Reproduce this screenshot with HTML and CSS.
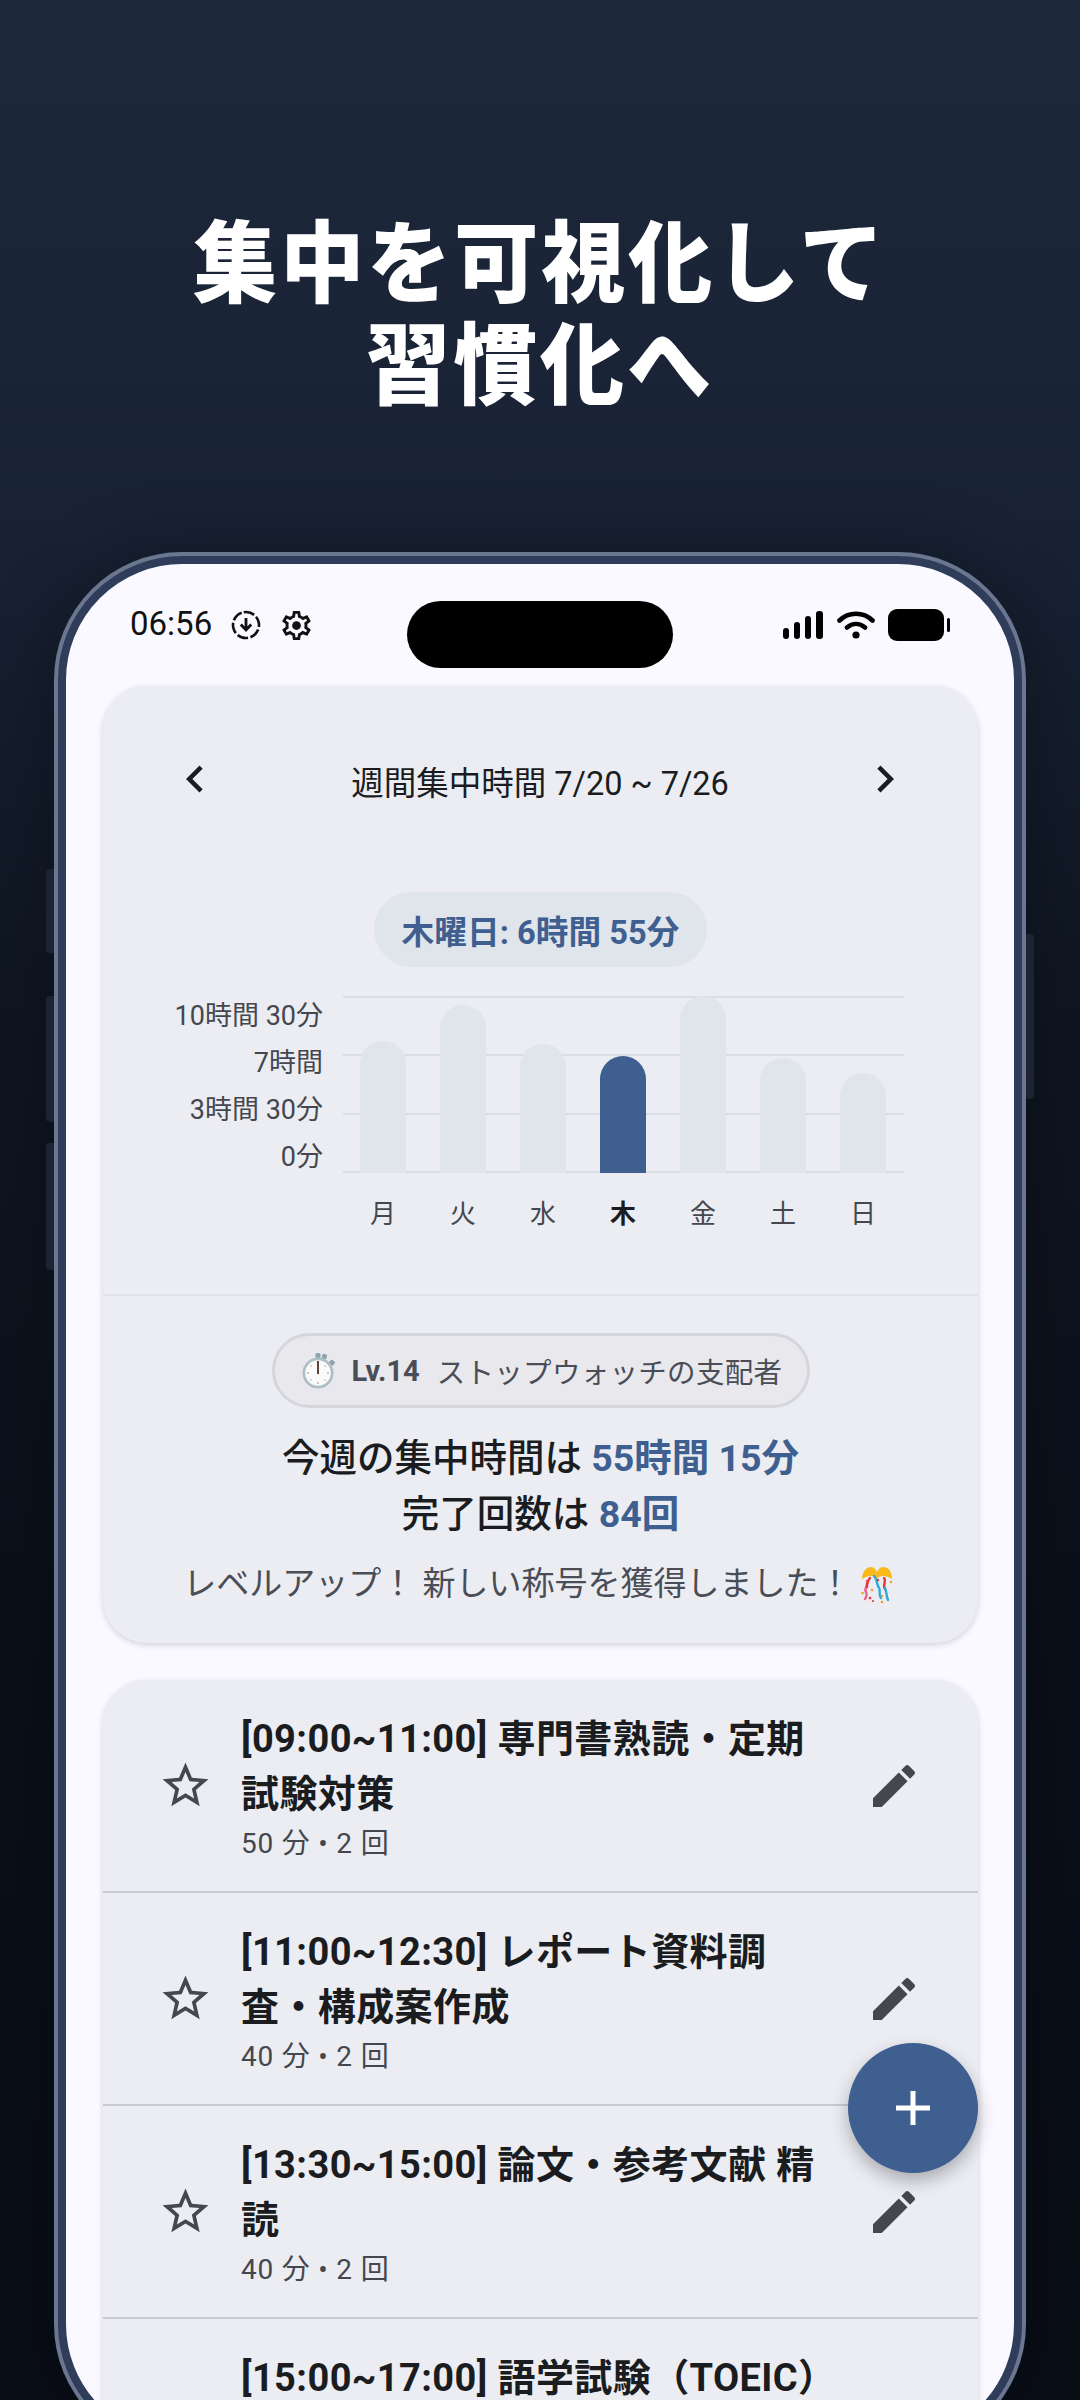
FILE: index.html
```html
<!DOCTYPE html>
<html lang="ja">
<head>
<meta charset="utf-8">
<title>集中を可視化して習慣化へ</title>
<link rel="stylesheet" href="styles.css">
</head>
<body>
<main class="stage">
  <h1 class="headline">集中を可視化して<br>習慣化へ</h1>
  <div class="phone">
    <span class="side side-a"></span>
    <span class="side side-b"></span>
    <span class="side side-c"></span>
    <span class="side side-r"></span>
    <div class="screen">
      <div class="island"></div>
      <header class="status">
        <div class="status-left">
          <span class="time">06:56</span>
          <svg class="ic-dl" viewBox="0 0 30 30"><circle cx="15" cy="15" r="13" fill="none" stroke="#111" stroke-width="2.6" stroke-dasharray="11 2.6" transform="rotate(-100 15 15)"/><path d="M15 8v11M9.8 14.5 15 20l5.2-5.5" fill="none" stroke="#111" stroke-width="2.8"/></svg>
          <svg class="ic-gear" viewBox="0 0 24 24"><path fill="#111" d="M19.43 12.98c.04-.32.07-.64.07-.98 0-.34-.03-.66-.07-.98l2.11-1.65c.19-.15.24-.42.12-.64l-2-3.46c-.09-.16-.26-.25-.44-.25-.06 0-.12.01-.17.03l-2.49 1c-.52-.4-1.08-.73-1.69-.98l-.38-2.65C14.46 2.18 14.25 2 14 2h-4c-.25 0-.46.18-.49.42l-.38 2.65c-.61.25-1.17.59-1.69.98l-2.49-1c-.06-.02-.12-.03-.18-.03-.17 0-.34.09-.43.25l-2 3.46c-.13.22-.07.49.12.64l2.11 1.65c-.04.32-.07.65-.07.98 0 .33.03.66.07.98l-2.11 1.65c-.19.15-.24.42-.12.64l2 3.46c.09.16.26.25.44.25.06 0 .12-.01.17-.03l2.49-1c.52.4 1.08.73 1.69.98l.38 2.65c.03.24.24.42.49.42h4c.25 0 .46-.18.49-.42l.38-2.65c.61-.25 1.17-.59 1.69-.98l2.49 1c.06.02.12.03.18.03.17 0 .34-.09.43-.25l2-3.46c.12-.22.07-.49-.12-.64l-2.11-1.65zm-1.98-1.71c.04.31.05.52.05.73 0 .21-.02.43-.05.73l-.14 1.13.89.7 1.08.84-.7 1.21-1.27-.51-1.04-.42-.9.68c-.43.32-.84.56-1.25.73l-1.06.43-.16 1.13-.2 1.35h-1.4l-.19-1.35-.16-1.13-1.06-.43c-.43-.18-.83-.41-1.23-.71l-.91-.7-1.06.43-1.27.51-.7-1.21 1.08-.84.89-.7-.14-1.13c-.03-.31-.05-.54-.05-.74s.02-.43.05-.73l.14-1.13-.89-.7-1.08-.84.7-1.21 1.27.51 1.04.42.9-.68c.43-.32.84-.56 1.25-.73l1.06-.43.16-1.13.2-1.35h1.39l.19 1.35.16 1.13 1.06.43c.43.18.83.41 1.23.71l.91.7 1.06-.43 1.27-.51.7 1.21-1.07.85-.89.7.14 1.13z"/><circle cx="12" cy="12" r="3" fill="#111"/></svg>
        </div>
        <div class="status-right">
          <svg class="ic-signal" viewBox="0 0 40 28"><g fill="#000"><rect x="0" y="17" width="6" height="11" rx="3"/><rect x="11" y="11" width="6" height="17" rx="3"/><rect x="22" y="5" width="6" height="23" rx="3"/><rect x="33" y="0" width="7" height="28" rx="3"/></g></svg>
          <svg class="ic-wifi" viewBox="0 0 38 28"><path d="M2.500 9.500C11.500 .5 26.500 .5 35.500 9.500M10 16.500C15.500 11.800 22.500 11.800 28 16.500" fill="none" stroke="#000" stroke-width="4.600" stroke-linecap="round"/><circle cx="19" cy="24" r="3.600" fill="#000"/></svg>
          <svg class="ic-batt" viewBox="0 0 62 32"><rect x="0" y="0" width="56" height="32" rx="9" fill="#000"/><rect x="59" y="9" width="3" height="14" rx="1.500" fill="#000"/></svg>
        </div>
      </header>

      <section class="card summary">
        <div class="nav">
          <svg class="ic-nav" viewBox="0 0 24 24"><path fill="#1a1c20" d="M15.41 7.41L14 6l-6 6 6 6 1.41-1.41L10.83 12z"/></svg>
          <span class="nav-title">週間集中時間 7/20 ~ 7/26</span>
          <svg class="ic-nav" viewBox="0 0 24 24"><path fill="#1a1c20" d="M10 6L8.59 7.41 13.17 12l-4.58 4.59L10 18l6-6z"/></svg>
        </div>
        <div class="pill-wrap"><span class="pill">木曜日: 6時間 55分</span></div>
        <div class="chart">
          <div class="y-axis">
            <span>10時間 30分</span>
            <span>7時間</span>
            <span>3時間 30分</span>
            <span>0分</span>
          </div>
          <div class="plot">
            <div class="grid-lines"><i></i><i></i><i></i><i></i></div>
            <div class="bars">
              <span class="bar" style="height:132px"></span>
              <span class="bar" style="height:168px"></span>
              <span class="bar" style="height:129px"></span>
              <span class="bar bar-on" style="height:117px"></span>
              <span class="bar" style="height:177px"></span>
              <span class="bar" style="height:115px"></span>
              <span class="bar" style="height:100px"></span>
            </div>
          </div>
          <div class="x-axis">
            <span>月</span><span>火</span><span>水</span><span class="x-on">木</span><span>金</span><span>土</span><span>日</span>
          </div>
        </div>
        <div class="stats">
          <div class="chip-wrap">
            <span class="chip">
              <svg class="ic-watch" viewBox="0 0 34 36">
                <rect x="21" y="1" width="5" height="5" rx="1.500" fill="#8fa3ad" transform="rotate(10 23 3)"/>
                <rect x="29" y="7" width="5" height="5" rx="1.500" fill="#8fa3ad" transform="rotate(40 31 9)"/>
                <rect x="14.500" y="0" width="5" height="5" rx="1.500" fill="#8fa3ad"/>
                <circle cx="17" cy="20" r="15.500" fill="#aebfc7"/>
                <circle cx="17" cy="20" r="12.800" fill="#fafafa"/>
                <g fill="#c9a58e"><circle cx="17" cy="10" r=".9"/><circle cx="27" cy="20" r=".9"/><circle cx="17" cy="30" r=".9"/><circle cx="7" cy="20" r=".9"/><circle cx="24" cy="13" r=".8"/><circle cx="10" cy="13" r=".8"/><circle cx="24" cy="27" r=".8"/><circle cx="10" cy="27" r=".8"/></g>
                <rect x="16" y="8" width="2" height="13" fill="#5d4037"/>
              </svg>
              <b class="chip-lv">Lv.14</b>
              <span class="chip-name">ストップウォッチの支配者</span>
            </span>
          </div>
          <p class="line">今週の集中時間は <b>55時間 15分</b></p>
          <p class="line">完了回数は <b>84回</b></p>
          <p class="levelup">レベルアップ！ 新しい称号を獲得しました！ <svg class="ic-party" viewBox="0 0 32 38">
            <path d="M1 13C1 5 6 1 10 1c3 0 5 3 6 5 1-2 3-5 6-5 5 0 9 4 9 12-3-2-6-3-9-3-3 0-5 1-6 3-1-2-3-3-6-3s-6 1-9 3z" fill="#f9b81c"/>
            <g fill="none" stroke-width="2.400" stroke-linecap="round">
              <path d="M6 15c3 4-4 7-1 11 1 2 1 4-1 7" stroke="#f06292"/>
              <path d="M9 12c-2 3-4 5-3 9" stroke="#e53935"/>
              <path d="M13 10c4 4 2 8 5 12 2 3-1 6 2 10" stroke="#29a9e0"/>
              <path d="M23 12c3 3-2 7 1 11" stroke="#e53935"/>
              <path d="M24 22c2 4 1 8 3 12" stroke="#29a9e0"/>
            </g>
            <g fill="#f29f1f"><circle cx="1.500" cy="27" r="1.300"/><circle cx="11" cy="24" r="1.300"/><circle cx="21" cy="30" r="1.300"/><circle cx="30" cy="16" r="1.300"/><circle cx="21" cy="36" r="1.300"/></g>
            <g fill="#e53935"><circle cx="9" cy="32" r="1.300"/><circle cx="17" cy="14" r="1.200"/><circle cx="12" cy="35" r="1.100"/></g>
          </svg></p>
        </div>
      </section>

      <section class="card list">
        <article class="row">
          <svg class="ic-star" viewBox="0 0 24 24"><path d="M22 9.240l-7.190-.62L12 2 9.190 8.630 2 9.240l5.460 4.730L5.820 21 12 17.270 18.180 21l-1.630-7.030L22 9.240zM12 15.400l-3.760 2.270 1-4.280-3.320-2.880 4.380-.38L12 6.100l1.710 4.040 4.380.38-3.320 2.880 1 4.280L12 15.400z"/></svg>
          <div class="row-text"><div class="row-title">[09:00~11:00] 専門書熟読・定期試験対策</div><div class="row-sub">50 分 • 2 回</div></div>
          <svg class="ic-edit" viewBox="0 0 24 24"><path d="M3 17.250V21h3.750L17.810 9.940l-3.750-3.750L3 17.250zM20.710 7.040c.39-.39.39-1.020 0-1.410l-2.340-2.340c-.39-.39-1.020-.39-1.410 0l-1.830 1.830 3.750 3.750 1.830-1.830z"/></svg>
        </article>
        <article class="row">
          <svg class="ic-star" viewBox="0 0 24 24"><path d="M22 9.240l-7.190-.62L12 2 9.190 8.630 2 9.240l5.460 4.730L5.820 21 12 17.270 18.180 21l-1.630-7.030L22 9.240zM12 15.400l-3.760 2.270 1-4.280-3.320-2.880 4.380-.38L12 6.100l1.710 4.040 4.380.38-3.320 2.880 1 4.280L12 15.400z"/></svg>
          <div class="row-text"><div class="row-title">[11:00~12:30] レポート資料調査・構成案作成</div><div class="row-sub">40 分 • 2 回</div></div>
          <svg class="ic-edit" viewBox="0 0 24 24"><path d="M3 17.250V21h3.750L17.810 9.940l-3.750-3.750L3 17.250zM20.710 7.040c.39-.39.39-1.020 0-1.410l-2.340-2.340c-.39-.39-1.020-.39-1.410 0l-1.830 1.830 3.750 3.750 1.830-1.830z"/></svg>
        </article>
        <article class="row">
          <svg class="ic-star" viewBox="0 0 24 24"><path d="M22 9.240l-7.190-.62L12 2 9.190 8.630 2 9.240l5.460 4.730L5.820 21 12 17.270 18.180 21l-1.630-7.030L22 9.240zM12 15.400l-3.760 2.270 1-4.280-3.320-2.880 4.380-.38L12 6.100l1.710 4.040 4.380.38-3.320 2.880 1 4.280L12 15.400z"/></svg>
          <div class="row-text"><div class="row-title">[13:30~15:00] 論文・参考文献 精読</div><div class="row-sub">40 分 • 2 回</div></div>
          <svg class="ic-edit" viewBox="0 0 24 24"><path d="M3 17.250V21h3.750L17.810 9.940l-3.750-3.750L3 17.250zM20.710 7.040c.39-.39.39-1.020 0-1.410l-2.340-2.340c-.39-.39-1.020-.39-1.410 0l-1.830 1.830 3.750 3.750 1.830-1.830z"/></svg>
        </article>
        <article class="row">
          <svg class="ic-star" viewBox="0 0 24 24"><path d="M22 9.240l-7.190-.62L12 2 9.190 8.630 2 9.240l5.460 4.730L5.820 21 12 17.270 18.180 21l-1.630-7.030L22 9.240zM12 15.400l-3.760 2.270 1-4.280-3.320-2.880 4.380-.38L12 6.100l1.710 4.040 4.380.38-3.320 2.880 1 4.280L12 15.400z"/></svg>
          <div class="row-text"><div class="row-title">[15:00~17:00] 語学試験（TOEIC）</div></div>
          <svg class="ic-edit" viewBox="0 0 24 24"><path d="M3 17.250V21h3.750L17.810 9.940l-3.750-3.750L3 17.250zM20.710 7.040c.39-.39.39-1.020 0-1.410l-2.340-2.340c-.39-.39-1.020-.39-1.410 0l-1.830 1.830 3.750 3.750 1.830-1.830z"/></svg>
        </article>
      </section>

      <button class="fab" aria-label="追加"><svg viewBox="0 0 34 34"><path d="M17 0v34M0 17h34" fill="none" stroke="#fff" stroke-width="5"/></svg></button>
    </div>
  </div>
</main>
</body>
</html>
```

FILE: styles.css
```css
* { box-sizing: border-box; }
html, body { margin: 0; padding: 0; }
body {
  width: 1080px;
  height: 2400px;
  overflow: hidden;
  font-family: Roboto, "Noto Sans CJK JP", sans-serif;
  background: #070b14;
}
.stage {
  width: 1080px;
  height: 2400px;
  overflow: hidden;
  display: flex;
  flex-direction: column;
  align-items: center;
  background: linear-gradient(180deg, #1d283a 0, #182234 520px, #0f1622 1000px, #0a0f19 1700px, #090d16 2400px);
}
.headline {
  margin: 212px 0 0;
  color: #fff;
  font-size: 84px;
  font-weight: 900;
  line-height: 96px;
  letter-spacing: 3px;
  text-align: center;
  font-family: "Noto Sans CJK JP", sans-serif;
  transform: scaleY(1.06);
}
.phone {
  position: relative;
  flex: none;
  margin-top: 148px;
  width: 972px;
  height: 1900px;
  padding: 4px;
  border-radius: 128px;
  background: #6b7690;
  box-shadow: 0 0 70px rgba(0, 0, 0, .3);
}
.side {
  position: absolute;
  width: 8px;
  background: #1d2331;
}
.side-a { left: -8px; top: 317px; height: 84px; border-radius: 4px 0 0 4px; }
.side-b { left: -8px; top: 444px; height: 126px; border-radius: 4px 0 0 4px; }
.side-c { left: -8px; top: 591px; height: 127px; border-radius: 4px 0 0 4px; }
.side-r { right: -8px; top: 382px; height: 165px; border-radius: 0 4px 4px 0; }
.screen {
  position: relative;
  width: 964px;
  height: 1892px;
  border: 8px solid #2f3d5a;
  border-radius: 124px;
  background: #f9f9ff;
  overflow: hidden;
}
.island {
  position: absolute;
  left: 341px;
  top: 37px;
  width: 266px;
  height: 67px;
  border-radius: 34px;
  background: #000;
}
.status {
  height: 122px;
  display: flex;
  align-items: center;
  justify-content: space-between;
  padding: 0 64px 0 64px;
}
.status-left, .status-right { display: flex; align-items: center; }
.time { font-size: 33px; color: #111; width: 80px; margin-top: -3px; }
.ic-dl { width: 30px; height: 30px; margin-left: 21px; }
.ic-gear { width: 35px; height: 35px; margin-left: 18px; }
.ic-signal { width: 40px; height: 28px; }
.ic-wifi { width: 38px; height: 28px; margin-left: 14px; }
.ic-batt { width: 62px; height: 32px; margin-left: 13px; }

.card {
  width: 875px;
  margin-left: 37px;
  background: #ebedf3;
  border-radius: 44px;
  box-shadow: 0 2px 6px rgba(0, 0, 0, .16);
}
.summary { padding-top: 56px; }
.nav {
  height: 80px;
  display: flex;
  align-items: center;
  justify-content: space-between;
  padding: 0 66px 0 65px;
  color: #1a1c20;
}
.ic-nav { width: 54px; height: 54px; margin-top: -6px; }
.nav-title { font-size: 32.5px; margin-top: -3px; }
.pill-wrap { display: flex; justify-content: center; margin-top: 70px; }
.pill {
  height: 75px;
  width: 333px;
  border-radius: 38px;
  background: #e0e4eb;
  color: #3e5f8f;
  font-size: 32.7px;
  font-weight: 700;
  display: flex;
  align-items: center;
  justify-content: center;
}
.chart {
  display: grid;
  grid-template-columns: 220px 561px;
  column-gap: 20px;
  margin-top: 29px;
}
.y-axis {
  display: flex;
  flex-direction: column;
  margin-top: -3px;
  text-align: right;
  font-size: 27px;
  color: #44474e;
}
.y-axis span { height: 47px; line-height: 47px; }
.plot { position: relative; height: 177px; }
.grid-lines {
  position: absolute;
  inset: 0;
  display: flex;
  flex-direction: column;
  justify-content: space-between;
}
.grid-lines i { display: block; height: 2px; background: #dadde3; }
.bars {
  position: relative;
  height: 177px;
  display: flex;
  align-items: flex-end;
  justify-content: space-between;
  padding: 0 18px 0 17px;
}
.bar { width: 46px; border-radius: 23px 23px 0 0; background: #e0e4eb; }
.bar-on { background: #3e5f8f; }
.x-axis {
  grid-column: 2;
  display: flex;
  justify-content: space-between;
  padding: 0 18px 0 17px;
  margin-top: 13px;
  height: 40px;
  line-height: 40px;
  font-size: 26px;
  color: #44474e;
  text-align: center;
}
.x-axis span { width: 46px; }
.x-on { color: #1a1c20; font-weight: 700; }
.stats {
  margin-top: 60px;
  border-top: 2px solid #e2e3e8;
  padding: 37px 0 36px;
  text-align: center;
}
.chip-wrap { display: flex; justify-content: center; margin-bottom: 22px; }
.chip {
  display: flex;
  align-items: center;
  width: 538px;
  height: 75px;
  padding-left: 26px;
  border: 3px solid #d5d6db;
  border-radius: 38px;
  background: #e8e8ed;
  color: #4a4d55;
}
.ic-watch { width: 34px; height: 36px; }
.chip-lv { margin-left: 17px; font-size: 29px; font-weight: 700; }
.chip-name { margin-left: 17px; font-size: 28.5px; letter-spacing: .3px; }
.line {
  margin: 0;
  font-size: 37.5px;
  line-height: 56px;
  font-weight: 500;
  color: #1a1c20;
}
.line b { color: #3e5f8f; font-weight: 700; }
.levelup {
  margin: 19px 0 0;
  padding-right: 4px;
  font-size: 33px;
  line-height: 46px;
  color: #4a4d55;
}
.ic-party { width: 34px; height: 38px; vertical-align: -9px; }

.list { margin-top: 37px; overflow: hidden; }
.row {
  height: 213px;
  display: flex;
  align-items: center;
  padding-left: 55px;
  border-bottom: 2px solid #c9cacf;
}
.ic-star { flex: none; width: 55px; height: 55px; fill: #44474e; }
.row-text { align-self: flex-start; width: 590px; margin-left: 28px; padding-top: 32px; }
.row-title { font-size: 38px; line-height: 55px; font-weight: 700; color: #1a1c20; letter-spacing: .4px; }
.row-sub { font-size: 28px; line-height: 43px; color: #44474e; letter-spacing: .8px; }
.ic-edit { flex: none; width: 56px; height: 56px; margin-left: 35px; fill: #44474e; }
.fab {
  position: absolute;
  left: 782px;
  top: 1479px;
  width: 130px;
  height: 130px;
  border: 0;
  padding: 0;
  border-radius: 50%;
  background: #3e5f8f;
  box-shadow: 0 8px 18px rgba(0, 0, 0, .28);
  display: flex;
  align-items: center;
  justify-content: center;
}
.fab svg { width: 34px; height: 34px; }
```
